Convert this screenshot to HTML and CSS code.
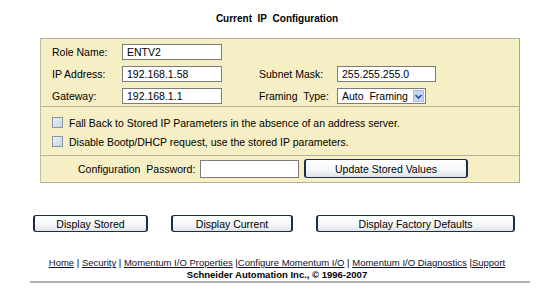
FILE: index.html
```html
<!DOCTYPE html>
<html>
<head>
<meta charset="utf-8">
<link rel="stylesheet" href="styles.css">
</head>
<body>
<div class="title">Current&nbsp; IP&nbsp; Configuration</div>
<div class="panel">
  <div class="sec1">
    <span class="lbl">Role Name:</span><span class="inp">ENTV2</span><span></span><span></span><span></span>
    <span class="lbl">IP Address:</span><span class="inp">192.168.1.58</span><span></span><span class="lbl">Subnet Mask:</span><span class="inp">255.255.255.0</span>
    <span class="lbl">Gateway:</span><span class="inp">192.168.1.1</span><span></span><span class="lbl">Framing&nbsp; Type:</span><span class="sel"><span class="seltxt">Auto&nbsp; Framing</span><span class="arrow"><svg width="9" height="9" viewBox="0 0 9 9"><path d="M1.5 3 L4.5 6 L7.5 3" fill="none" stroke="#2a4a9a" stroke-width="1.6"/></svg></span></span>
  </div>
  <div class="sec2">
    <div class="cbrow"><span class="cb"></span><span>Fall Back to Stored IP Parameters in the absence of an address server.</span></div>
    <div class="cbrow"><span class="cb"></span><span>Disable Bootp/DHCP request, use the stored IP parameters.</span></div>
  </div>
  <div class="sec3">
    <span class="pwlbl">Configuration&nbsp; Password:</span>
    <span class="inp pw"></span>
    <span class="btn upd">Update Stored Values</span>
  </div>
</div>
<div class="btnrow">
  <span class="btn b1">Display Stored</span>
  <span class="btn b2">Display Current</span>
  <span class="btn b3">Display Factory Defaults</span>
</div>
<div class="links"><a href="#">Home</a> | <a href="#">Security</a> | <a href="#">Momentum I/O Properties</a> |<a href="#">Configure Momentum I/O</a> | <a href="#">Momentum I/O Diagnostics</a> |<a href="#">Support</a></div>
<div class="copy">Schneider Automation Inc., &copy; 1996-2007</div>
<div class="rule"></div>
</body>
</html>
```

FILE: styles.css
```css
* { box-sizing: border-box; }
body {
  margin: 0;
  font-family: "Liberation Sans", Arial, sans-serif;
  font-size: 10.5px;
  color: #000;
  background: #fff;
}
.title {
  height: 38px;
  padding-top: 13px;
  text-align: center;
  font-weight: bold;
  font-size: 10px;
}
.panel {
  margin-left: 40px;
  width: 480px;
  background: #f6eec4;
  border-top: 1px solid #b8b094;
  border-left: 1px solid #c4bca4;
  border-right: 1px solid #a8a49a;
  border-bottom: 1px solid #b8b094;
}
.sec1 {
  display: grid;
  grid-template-columns: 70px 100px 37px 78px 99px;
  grid-auto-rows: 16px;
  row-gap: 6px;
  align-items: center;
  padding: 5px 0 2px 11px;
  border-bottom: 1px solid #bab29a;
  white-space: nowrap;
}
.inp {
  display: flex;
  align-items: center;
  height: 16px;
  background: #fff;
  border: 1px solid #7c7c7c;
  padding-left: 4px;
  white-space: nowrap;
}
.sel {
  display: flex;
  align-items: stretch;
  width: 89px;
  height: 16px;
  background: #fff;
  border: 1px solid #7c7c7c;
}
.seltxt {
  flex: 1;
  padding-left: 4px;
  display: flex;
  align-items: center;
  overflow: hidden;
}
.arrow {
  width: 11px;
  margin: 1px;
  background: #c4d6f4;
  border: 1px solid #a8bde6;
  display: flex;
  align-items: center;
  justify-content: center;
}
.sec2 {
  padding: 6px 0 4px 11px;
  border-bottom: 1px solid #bab29a;
}
.cbrow {
  height: 19px;
  display: flex;
  align-items: center;
  gap: 6px;
}
.cb {
  width: 11px;
  height: 11px;
  border: 1px solid #8a96aa;
  background: linear-gradient(135deg, #eef2f6, #c8d2e0);
}
.sec3 {
  display: flex;
  align-items: center;
  padding: 3px 0 4px 37px;
  height: 26px;
  white-space: nowrap;
}
.pwlbl { width: 122px; }
.pw { width: 99px; height: 18px; }
.btn {
  display: flex;
  align-items: center;
  justify-content: center;
  height: 17px;
  background: linear-gradient(#ffffff, #f4f6f8 60%, #dfe4ea);
  border: 1px solid #1e2c4e;
  border-left-width: 2px;
  border-right-width: 2px;
  border-radius: 3px;
  white-space: nowrap;
}
.upd { width: 164px; margin-left: 5px; height: 19px; }
.btnrow {
  display: flex;
  margin-top: 32px;
  padding-left: 33px;
  gap: 23px;
}
.b1 { width: 115px; }
.b2 { width: 122px; }
.b3 { width: 199px; }
.links {
  margin-top: 25px;
  text-align: center;
  font-size: 9.5px;
  line-height: 11px;
}
.links a { color: #101030; text-decoration: underline; }
.copy {
  margin-top: 1px;
  text-align: center;
  font-weight: bold;
  font-size: 9.5px;
  line-height: 11px;
}
.rule {
  margin: 1px 24px 0 30px;
  height: 2px;
  background: #b4b0b8;
}
```
